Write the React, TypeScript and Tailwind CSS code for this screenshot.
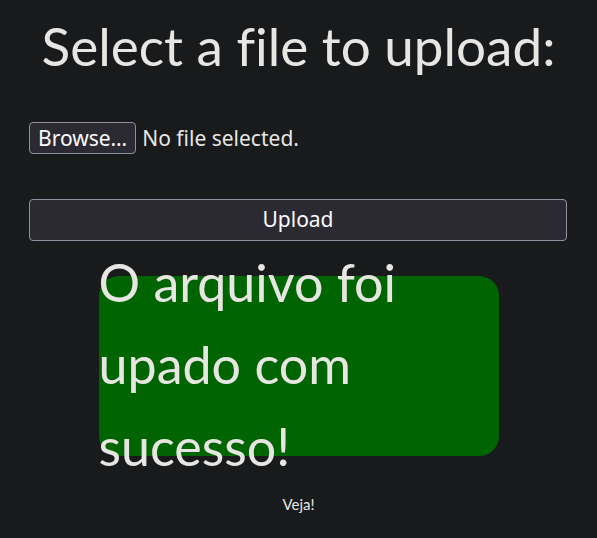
export default function App() {
  return (
    <div className="min-h-[538px] bg-[#181a1b] text-[#e8e6e3] font-['Lato',sans-serif] [font-variant-ligatures:none] flex flex-col">
      <h1 className="mt-[14px] text-center text-[53px] leading-[64px] font-normal whitespace-nowrap">
        Select a file to upload:
      </h1>
      <div className="mt-[44px] ml-[29px] flex items-center gap-[6px] font-['Noto_Sans',sans-serif] text-[21px]">
        <button className="h-[32px] px-[8px] rounded-[4px] border border-[#8f8f9d] bg-[#2b2a33] leading-none text-[#fbfbfe]">
          Browse…
        </button>
        <span className="leading-none">No file selected.</span>
      </div>
      <button className="mt-[45px] ml-[29px] w-[538px] h-[42px] rounded-[4px] border border-[#8f8f9d] bg-[#2b2a33] font-['Noto_Sans',sans-serif] text-[21px] text-[#fbfbfe]">
        Upload
      </button>
      <div className="mt-[35px] mx-auto w-[400px] h-[180px] rounded-[20px] bg-[#006400] flex items-center">
        <p className="text-[52px] leading-[82px] -mt-[4px]">O arquivo foi upado com sucesso!</p>
      </div>
      <p className="mt-[38px] text-center text-[15px] leading-[20px]">Veja!</p>
    </div>
  );
}
